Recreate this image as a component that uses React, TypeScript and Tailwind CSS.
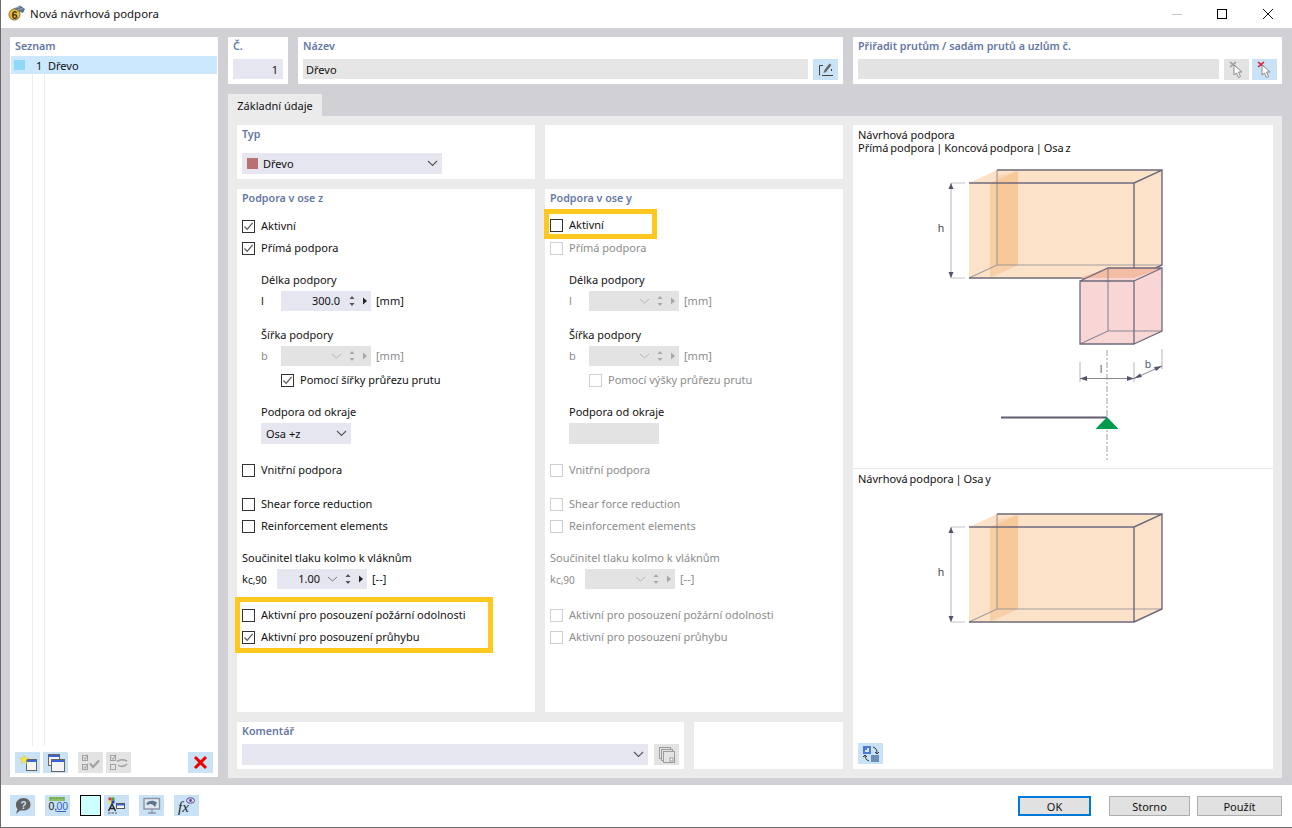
import type { ReactNode } from 'react';

const gray = 'text-[#8c8c8c]';
const titleCls = 'font-semibold text-[10.7px] text-[#6478a6]';

const Title = ({ children }: { children: ReactNode }) => (
  <div className={`h-[18px] leading-[18px] ${titleCls}`}>{children}</div>
);

const Check = ({ checked, disabled }: { checked?: boolean; disabled?: boolean }) => (
  <span className={`flex h-[13px] w-[13px] shrink-0 items-center justify-center border bg-white ${disabled ? 'border-[#cfcfcf]' : 'border-[#333333]'}`}>
    {checked && (
      <svg width="11" height="11" viewBox="0 0 11 11">
        <path d="M1.5 5.5 L4.2 8.4 L9.6 1.8" fill="none" stroke="#555555" strokeWidth="1.2" />
      </svg>
    )}
  </span>
);

const CheckRow = ({ label, checked, disabled, className = '' }: { label: string; checked?: boolean; disabled?: boolean; className?: string }) => (
  <div className={`flex h-[22px] items-center gap-[6px] ${disabled ? gray : ''} ${className}`}>
    <Check checked={checked} disabled={disabled} />
    <span className="mb-[2px]">{label}</span>
  </div>
);

const SpinInput = ({ value, chevron, disabled }: { value?: string; chevron?: boolean; disabled?: boolean }) => {
  const mark = disabled ? '#a8a8a8' : '#555555';
  const tri = disabled ? '#a8a8a8' : '#222222';
  return (
    <div className={`flex h-[20px] w-[90px] items-center justify-end ${disabled ? 'bg-[#e3e3e3]' : 'bg-[#e6e6f0]'}`}>
      <span className="mb-[2px]">{value}</span>
      <svg width={chevron ? 47 : 31} height="20" viewBox={chevron ? '0 0 47 20' : '16 0 31 20'}>
        {chevron && <path d="M8 8 L12.5 12 L17 8" fill="none" stroke={disabled ? '#b4b4b4' : '#777777'} strokeWidth="1" />}
        <path d="M25.5 8 L28 5 L30.5 8 Z M25.5 12 L28 15 L30.5 12 Z" fill={mark} />
        <path d="M39 6.5 L43 10 L39 13.5 Z" fill={tri} />
      </svg>
    </div>
  );
};

const DimRow = ({ label, disabled, value, chevron }: { label: string; disabled?: boolean; value?: string; chevron?: boolean }) => (
  <div className="ml-[19px] mt-[2px] flex h-[20px] items-center">
    <span className={`mb-[2px] w-[20px] ${disabled ? gray : ''}`}>{label}</span>
    <SpinInput value={value} chevron={chevron} disabled={disabled} />
    <span className={`mb-[2px] ml-[5px] ${disabled ? gray : ''}`}>[mm]</span>
  </div>
);

const Btn = ({ children, off, className = '' }: { children: ReactNode; off?: boolean; className?: string }) => (
  <div className={`flex h-[21px] w-[25px] shrink-0 items-center justify-center ${off ? 'bg-[#e3e3e3]' : 'bg-[#c9e2f6]'} ${className}`}>{children}</div>
);

const Chevron = ({ className = '' }: { className?: string }) => (
  <svg width="11" height="7" viewBox="0 0 11 7" className={className}>
    <path d="M1 1 L5.5 5.5 L10 1" fill="none" stroke="#555555" strokeWidth="1.1" />
  </svg>
);

const CursorIcon = ({ color }: { color: string }) => (
  <svg width="18" height="18" viewBox="0 0 18 18">
    <path d="M2 1 L8 6 M8 1 L2 6" stroke={color} strokeWidth="1.5" />
    <path d="M6 4 L6 14 L8.5 12 L10.5 16.5 L12.5 15.5 L10.5 11 L14 11 Z" fill="#ffffff" stroke="#8a8a8a" strokeWidth="1" />
  </svg>
);

const NewWindowIcon = ({ star }: { star?: boolean }) => (
  <svg width="22" height="20" viewBox="0 0 22 20">
    {star ? (
      <>
        <rect x="9.5" y="6.5" width="10" height="11" fill="#f4f4f4" stroke="#666666" />
        <rect x="10" y="7" width="9" height="2" fill="#3b62d6" />
        <path d="M7 2 L8.2 5 L11.5 5 L9 7.2 L10 10.5 L7 8.6 L4 10.5 L5 7.2 L2.5 5 L5.8 5 Z" fill="#f7e53a" stroke="#d8c020" strokeWidth="0.4" />
      </>
    ) : (
      <>
        <rect x="3.5" y="1.5" width="11" height="11" fill="#f4f4f4" stroke="#666666" />
        <rect x="4" y="2" width="10" height="2" fill="#3b62d6" />
        <rect x="6.5" y="6.5" width="13" height="12" fill="#f4f4f4" stroke="#666666" />
        <rect x="7" y="7" width="12" height="2" fill="#3b62d6" />
      </>
    )}
  </svg>
);

const CheckListIcon = ({ swap }: { swap?: boolean }) => (
  <svg width="21" height="18" viewBox="0 0 21 18" fill="none" stroke="#a2a2a2">
    <rect x="2.5" y="1.5" width="5" height="5" />
    <rect x="2.5" y="10.5" width="5" height="5" />
    <path d="M3.5 3.5 L5 5.5 L8 0.5" />
    {!swap && <path d="M3.5 12.5 L5 14.5 L8 9.5" />}
    {swap ? (
      <path d="M9 7.5 C12 5 15 5 19 7 M19 10 C16 13 13 13 10 11" strokeWidth="1.5" />
    ) : (
      <path d="M10 9.5 L13 13 L19 6.5" strokeWidth="2.2" />
    )}
  </svg>
);

const Logo = () => (
  <svg width="18" height="18" viewBox="0 0 18 18">
    <path d="M5 4 L12 0.5 L17 4 L15 8 L10 6 Z" fill="#59708f" />
    <path d="M7 3.5 L12 1.5 M9 5 L15 3.5" stroke="#a9bbd0" strokeWidth="0.8" />
    <circle cx="6.5" cy="9.5" r="5.5" fill="#f2c230" stroke="#5c5330" strokeWidth="0.8" />
    <text x="6.5" y="13.5" textAnchor="middle" fontSize="11" fontWeight="700" fill="#3c3418" fontFamily="Liberation Sans, sans-serif">6</text>
  </svg>
);

const BottomIcons = () => (
  <div className="flex items-center">
    <Btn>
      <svg width="18" height="18" viewBox="0 0 18 18">
        <path d="M9.5 1 C14 1 16.5 4 16.5 7.5 C16.5 11 14 13.5 9.5 13.5 L6 13.5 L2 17 L3.5 12 C2 10.5 2 9 2 7.5 C2 4 5 1 9.5 1 Z" fill="#626262" />
        <text x="9.5" y="11.5" textAnchor="middle" fontSize="10" fontWeight="700" fill="#c9e2f6" fontFamily="Liberation Sans, sans-serif">?</text>
      </svg>
    </Btn>
    <Btn className="ml-[10px]">
      <svg width="25" height="21" viewBox="0 0 25 21">
        <rect x="4" y="2" width="16" height="4" fill="#8dbf63" />
        <path d="M6 2v2M9 2v2M12 2v2M15 2v2M18 2v2" stroke="#5b8a3a" strokeWidth="0.8" />
        <text x="3.5" y="15" fontSize="10.5" fill="#222222" fontFamily="Liberation Sans, sans-serif">0,</text>
        <text x="11.5" y="15" fontSize="10.5" fill="#2d63c8" fontFamily="Liberation Sans, sans-serif">00</text>
        <path d="M11.5 16.5 H21" stroke="#2d63c8" />
      </svg>
    </Btn>
    <div className="ml-[10px] h-[21px] w-[21px] border border-black bg-[#ccffff]" />
    <Btn className="ml-[3px]">
      <svg width="24" height="20" viewBox="0 0 24 20">
        <rect x="3.5" y="1.5" width="3" height="3" fill="#d33" />
        <rect x="6.5" y="1.5" width="3" height="3" fill="#3a3" />
        <rect x="3.5" y="4.5" width="3" height="3" fill="#ee3" />
        <rect x="6.5" y="4.5" width="3" height="3" fill="#33c" />
        <rect x="11.5" y="7.5" width="8" height="5" fill="#f4f4f4" stroke="#555555" />
        <rect x="12" y="8" width="7" height="1.5" fill="#3b62d6" />
        <path d="M3.5 15 L7 8 L10.5 15 M5 12.5 H9" fill="none" stroke="#222222" strokeWidth="1.4" />
        <path d="M3 17 H5.5 M6.5 17 H9 M10 17 H12" stroke="#555555" />
      </svg>
    </Btn>
    <Btn className="ml-[10px]">
      <svg width="20" height="20" viewBox="0 0 20 20">
        <rect x="2" y="2.5" width="15.5" height="10.5" fill="#dfe6ee" stroke="#8a95a3" strokeWidth="1.4" />
        <path d="M4 8 C6 4.5 11 3.5 15 6.5 L13 11 C11 8 8 7 6 9 Z" fill="#5d7590" />
        <path d="M10 13 V16.5 M6 17 H14" stroke="#8a95a3" strokeWidth="1.4" />
      </svg>
    </Btn>
    <Btn className="ml-[10px]">
      <svg width="24" height="20" viewBox="0 0 24 20">
        <text x="3" y="16" fontSize="15" fontStyle="italic" fontFamily="Liberation Serif, serif" fill="#222222">fx</text>
        <ellipse cx="15.5" cy="4.5" rx="4" ry="2.8" fill="#d8d8ea" stroke="#5a4d99" />
        <circle cx="15.5" cy="4.5" r="1.4" fill="#5a4d99" />
      </svg>
    </Btn>
  </div>
);

const Beam = ({ top }: { top: number }) => {
  const t = top;
  return (
    <g>
      <path d={`M969 ${t} L997 ${t - 13} H1162 V${t + 82} L1134 ${t + 95} H969 Z`} fill="#fbe2c8" />
      <path d={`M990 ${t} L1018 ${t - 12} V${t + 82} L990 ${t + 95} Z`} fill="#f3b878" fillOpacity="0.45" />
      <path d={`M997 ${t - 7} V${t + 82} L1018 ${t + 82} V${t - 12} Z`} fill="#f3b878" fillOpacity="0.25" />
      <path d={`M969 ${t + 95} L997 ${t + 82} H1162 M997 ${t + 82} V${t - 13}`} fill="none" stroke="#8a8794" strokeWidth="1.2" opacity="0.75" />
      <path d={`M969 ${t} H1134 V${t + 95} H969 M1134 ${t} L1162 ${t - 13} V${t + 82} L1134 ${t + 95} M997 ${t - 13} H1162`} fill="none" stroke="#6d6a7c" strokeWidth="1.4" />
      <path d={`M951 ${t} H965 M951 ${t + 95} H965`} stroke="#c4c4cc" strokeWidth="1" />
      <path d={`M951 ${t} V${t + 95}`} stroke="#b4b4bc" strokeWidth="1" />
      <path d={`M948.5 ${t + 6} L951 ${t} L953.5 ${t + 6} Z M948.5 ${t + 89} L951 ${t + 95} L953.5 ${t + 89} Z`} fill="#55536a" />
      <text x="941" y={t + 49} textAnchor="middle" fontSize="10.5" fill="#444444" fontFamily="Noto Sans, sans-serif">h</text>
    </g>
  );
};

const UpperDiagram = () => (
  <svg width="420" height="313" viewBox="853 155 420 313" className="block">
    <Beam top={183} />
    <path d="M1080 281 L1108 268 H1162 V331 L1134 344 H1080 Z" fill="#f8d6d6" />
    <path d="M1080 278 L1108 268 H1162 L1134 278 Z" fill="#f4bca4" />
    <path d="M1080 344 L1108 331 H1162 M1108 331 V268" fill="none" stroke="#8a8794" strokeWidth="1.1" />
    <path d="M1080 281 H1134 V344 H1080 Z M1080 281 L1108 268 H1162 V331 L1134 344 M1134 281 L1162 268" fill="none" stroke="#6d6a7c" strokeWidth="1.3" />
    <path d="M1107 350 V460" stroke="#a0a0a8" strokeWidth="1" strokeDasharray="6 2 2 2" />
    <path d="M1080 362 V382 M1134 362 V382 M1162 349 V369" stroke="#b4b4bc" strokeWidth="1" />
    <path d="M1080 378.5 H1134 M1134 378.5 L1162 366" stroke="#8a8794" strokeWidth="1" />
    <path d="M1080 378.5 L1087 376 V381 Z M1134 378.5 L1127 376 V381 Z M1134 378.5 L1140 373.5 L1142 377 Z M1162 366 L1156 371 L1154 367 Z" fill="#55536a" />
    <text x="1101" y="373" textAnchor="middle" fontSize="10.5" fill="#55555f" fontFamily="Noto Sans, sans-serif">l</text>
    <text x="1148" y="368" textAnchor="middle" fontSize="10.5" fill="#55555f" fontFamily="Noto Sans, sans-serif">b</text>
    <path d="M1001 417.5 H1107" stroke="#5f5d70" strokeWidth="2" />
    <path d="M1107 417 L1118.5 429 H1095.5 Z" fill="#009b4e" />
  </svg>
);

const LowerDiagram = () => (
  <svg width="420" height="150" viewBox="853 489 420 150" className="block">
    <Beam top={527} />
  </svg>
);

const FormColumn = ({ z }: { z?: boolean }) => {
  const off = !z;
  return (
    <div className="w-[298px] bg-white pl-[5px]">
      <Title>{z ? 'Podpora v ose z' : 'Podpora v ose y'}</Title>
      {z ? (
        <CheckRow label="Aktivní" checked className="mt-[8px]" />
      ) : (
        <div className="ml-[-6px] mt-[2px] h-[30px] w-[113px] border-[5px] border-[#ffc81e] pl-[1px]">
          <CheckRow label="Aktivní" className="h-[20px]" />
        </div>
      )}
      <CheckRow label="Přímá podpora" checked={z} disabled={off} className={z ? '' : 'mt-[-2px]'} />

      <div className="ml-[19px] mt-[12px] h-[18px] leading-[18px]">Délka podpory</div>
      <DimRow label="l" disabled={off} value={z ? '300.0' : undefined} chevron={off} />
      <div className="ml-[19px] mt-[15px] h-[18px] leading-[18px]">Šířka podpory</div>
      <DimRow label="b" disabled chevron />
      <div className="ml-[39px] mt-[3px]">
        <CheckRow label={z ? 'Pomocí šířky průřezu prutu' : 'Pomocí výšky průřezu prutu'} checked={z} disabled={off} />
      </div>
      <div className="ml-[19px] mt-[12px] h-[18px] leading-[18px]">Podpora od okraje</div>
      {z ? (
        <div className="ml-[19px] mt-[2px] flex h-[21px] w-[90px] items-center justify-between bg-[#e6e6f0] pl-[5px] pr-[4px]">
          <span>Osa +z</span>
          <Chevron />
        </div>
      ) : (
        <div className="ml-[19px] mt-[2px] h-[21px] w-[90px] bg-[#e3e3e3]" />
      )}
      <CheckRow label="Vnitřní podpora" disabled={off} className="mt-[15px]" />
      <CheckRow label="Shear force reduction" disabled={off} className="mt-[12px]" />
      <CheckRow label="Reinforcement elements" disabled={off} />
      <div className={`mt-[12px] h-[18px] leading-[18px] ${off ? gray : ''}`}>Součinitel tlaku kolmo k vláknům</div>
      <div className="mt-[2px] flex h-[20px] items-center">
        <span className={`mb-[2px] w-[35px] ${off ? gray : ''}`}>
          k<sub className="bottom-[-1px] text-[10px]">c,90</sub>
        </span>
        <SpinInput value={z ? '1.00' : undefined} chevron disabled={off} />
        <span className={`mb-[2px] ml-[5px] ${off ? gray : ''}`}>[--]</span>
      </div>
      {z ? (
        <div className="ml-[-7px] mt-[8px] h-[56px] w-[258px] border-[5px] border-[#ffc81e] pl-[2px] pt-[2px]">
          <CheckRow label="Aktivní pro posouzení požární odolnosti" />
          <CheckRow label="Aktivní pro posouzení průhybu" checked />
        </div>
      ) : (
        <div className="mt-[15px]">
          <CheckRow label="Aktivní pro posouzení požární odolnosti" disabled />
          <CheckRow label="Aktivní pro posouzení průhybu" disabled />
        </div>
      )}
    </div>
  );
};

export default function App() {
  return (
    <div className="flex h-[828px] w-[1292px] flex-col overflow-hidden border-b border-l border-[#6a6a6a] bg-white font-['Noto_Sans',sans-serif] text-[11px] leading-none text-[#111111]">
      {/* Title bar */}
      <div className="flex h-[28px] shrink-0 items-center pl-[7px]">
        <Logo />
        <span className="ml-[4px] text-[11.4px]">Nová návrhová podpora</span>
        <div className="ml-auto flex items-center">
          <div className="h-px w-[10px] bg-[#c4c4c4]" />
          <div className="ml-[35px] h-[10px] w-[10px] border border-black" />
          <svg width="12" height="12" viewBox="0 0 12 12" className="ml-[35px] mr-[18px]">
            <path d="M1 1 L11 11 M11 1 L1 11" stroke="#111111" strokeWidth="1" />
          </svg>
        </div>
      </div>

      {/* Main area */}
      <div className="flex h-[757px] shrink-0 gap-[10px] bg-[#d0d0d5] pl-[9px] pt-[9px]">
        {/* List */}
        <div className="flex h-[740px] w-[208px] flex-col bg-white">
          <div className={`flex h-[19px] items-center pb-px pl-[5px] ${titleCls}`}>Seznam</div>
          <div className="mx-px flex h-[18px] items-center bg-[#cce8ff]">
            <div className="ml-[3px] h-[10px] w-[11px] bg-[#90d8f8]" />
            <span className="ml-[11px] w-[12px]">1</span>
            <span>Dřevo</span>
          </div>
          <div className="ml-[22px] flex h-[672px] w-[13px] border-x border-[#ececec]" />
          <div className="mb-[4px] mt-auto flex items-center pl-[5px]">
            <Btn><NewWindowIcon star /></Btn>
            <Btn className="ml-[3px]"><NewWindowIcon /></Btn>
            <Btn off className="ml-[10px]"><CheckListIcon /></Btn>
            <Btn off className="ml-[3px]"><CheckListIcon swap /></Btn>
            <Btn className="ml-[57px]">
              <svg width="15" height="15" viewBox="0 0 15 15">
                <path d="M2 2 L13 13 M13 2 L2 13" stroke="#f00000" strokeWidth="3" />
              </svg>
            </Btn>
          </div>
        </div>

        {/* Right column */}
        <div className="flex w-[1054px] flex-col">
          <div className="flex h-[47px] gap-[10px]">
            <div className="w-[60px] bg-white px-[5px]">
              <div className={`flex h-[18px] items-center ${titleCls}`}>Č.</div>
              <div className="mt-[4px] flex h-[20px] items-center justify-end bg-[#e6e6f0] pr-[5px]">1</div>
            </div>
            <div className="w-[545px] bg-white px-[5px]">
              <div className={`flex h-[18px] items-center ${titleCls}`}>Název</div>
              <div className="mt-[4px] flex gap-[5px]">
                <div className="flex h-[20px] flex-1 items-center bg-[#e6e6e6] pl-[3px]">Dřevo</div>
                <Btn className="h-[20px]">
                  <svg width="18" height="16" viewBox="0 0 18 16" fill="none" stroke="#444444" strokeWidth="1">
                    <path d="M6 3.5 H2.5 V13.5 M5 13.5 H16" />
                    <path d="M14.5 9 V7" />
                    <path d="M6.5 11 L7.5 8 L12.5 1.5 L14.5 3 L9 10 Z" fill="#666666" stroke="none" />
                  </svg>
                </Btn>
              </div>
            </div>
            <div className="w-[429px] bg-white px-[5px]">
              <div className={`flex h-[18px] items-center ${titleCls}`}>Přiřadit prutům / sadám prutů a uzlům č.</div>
              <div className="mt-[4px] flex">
                <div className="h-[20px] flex-1 bg-[#e3e3e3]" />
                <Btn off className="ml-[5px] h-[20px]"><CursorIcon color="#9a9a9a" /></Btn>
                <Btn className="ml-[3px] h-[20px]"><CursorIcon color="#e0142c" /></Btn>
              </div>
            </div>
          </div>

          <div className="mt-[10px] flex h-[22px] w-[94px] items-center justify-center bg-[#ebebeb]">Základní údaje</div>

          <div className="flex h-[662px] gap-[10px] bg-[#ebebeb] p-[9px]">
            <div className="flex w-[606px] flex-col gap-[10px]">
              <div className="flex h-[54px] gap-[10px]">
                <div className="w-[298px] bg-white px-[5px]">
                  <Title>Typ</Title>
                  <div className="mt-[10px] flex h-[21px] w-[200px] items-center bg-[#e6e6f0] pl-[5px] pr-[4px]">
                    <div className="h-[11px] w-[11px] bg-[#b97070]" />
                    <span className="ml-[5px]">Dřevo</span>
                    <Chevron className="ml-auto" />
                  </div>
                </div>
                <div className="w-[298px] bg-white" />
              </div>
              <div className="flex h-[523px] gap-[10px]">
                <FormColumn z />
                <FormColumn />
              </div>
              <div className="flex h-[47px] gap-[10px]">
                <div className="w-[447px] bg-white px-[5px]">
                  <Title>Komentář</Title>
                  <div className="mt-[4px] flex gap-[6px]">
                    <div className="flex h-[21px] w-[407px] items-center justify-end bg-[#e6e6f0] pr-[4px]">
                      <Chevron />
                    </div>
                    <Btn off>
                      <svg width="18" height="18" viewBox="0 0 18 18" fill="#e3e3e3" stroke="#9c9c9c">
                        <rect x="1.5" y="1.5" width="11" height="11" />
                        <rect x="3.5" y="3.5" width="11" height="11" />
                        <rect x="5.5" y="5.5" width="11" height="11" />
                        <rect x="12" y="12" width="3" height="3" fill="#ffffff" />
                      </svg>
                    </Btn>
                  </div>
                </div>
                <div className="w-[149px] bg-white" />
              </div>
            </div>

            {/* Diagrams */}
            <div className="flex w-[420px] flex-col bg-white">
              <div className="h-[344px] border-b border-[#e8e8e8]">
                <div className="pb-px pl-[5px] pt-[3px] leading-[13px]">
                  <div>Návrhová podpora</div>
                  <div className="[word-spacing:-1px]">Přímá podpora | Koncová podpora | Osa z</div>
                </div>
                <UpperDiagram />
              </div>
              <div className="flex h-[20px] items-center pb-[2px] pl-[5px] [word-spacing:-1px]">Návrhová podpora | Osa y</div>
              <LowerDiagram />
              <div className="mb-[5px] ml-[5px] mt-auto">
                <Btn>
                  <svg width="20" height="18" viewBox="0 0 20 18">
                    <rect x="2" y="1" width="8" height="8" fill="#4a78d8" />
                    <path d="M4 7 V5 H6 V3 H8 V7 Z" fill="#dbe6fa" />
                    <rect x="10" y="10" width="8" height="7" fill="#6d8db5" />
                    <path d="M12 2 C15 3 16 5 16 8 M14 7 L16 9 L18 7 M8 16 C5 15 4 13 4 10 M2 12 L4 10 L6 12" fill="none" stroke="#333333" />
                  </svg>
                </Btn>
              </div>
            </div>
          </div>
        </div>
      </div>

      {/* Footer */}
      <div className="flex h-[42px] shrink-0 items-start pl-[9px] pt-[10px]">
        <BottomIcons />
        <div className="ml-auto flex items-center pr-[10px] pt-px">
          <div className="flex h-[20px] w-[73px] items-center justify-center border-2 border-[#0078d7] bg-[#e1e1e1]">OK</div>
          <div className="ml-[18px] flex h-[20px] w-[81px] items-center justify-center border border-[#adadad] bg-[#e1e1e1]">Storno</div>
          <div className="ml-[7px] flex h-[20px] w-[85px] items-center justify-center border border-[#adadad] bg-[#e1e1e1]">Použít</div>
        </div>
      </div>
    </div>
  );
}
